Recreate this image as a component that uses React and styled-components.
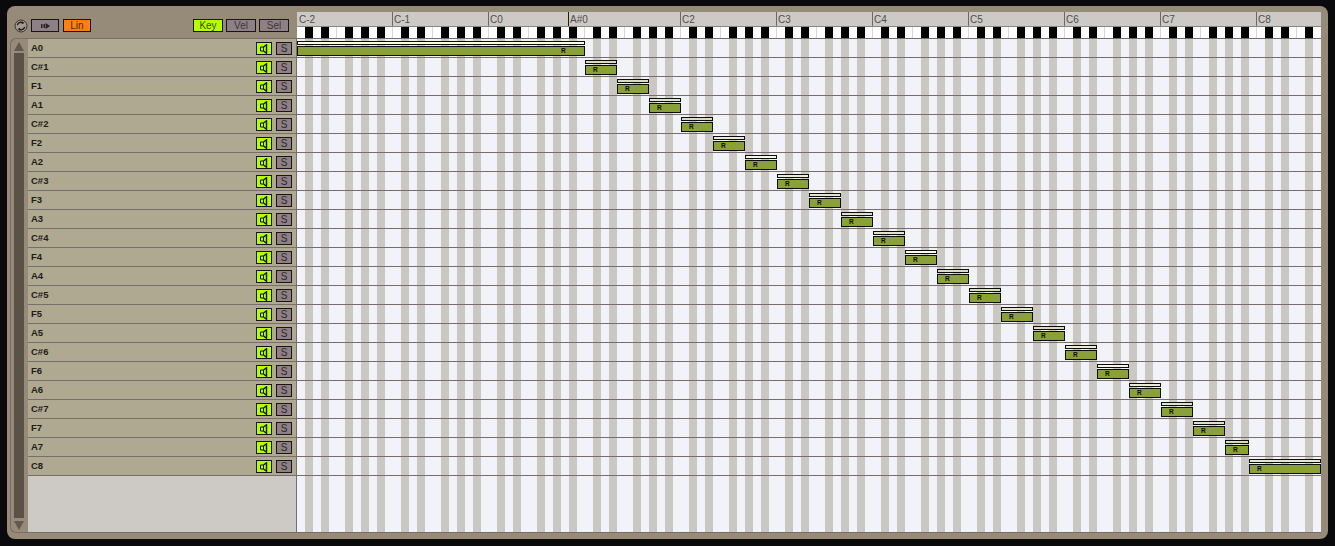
import React from 'react';
import styled, { createGlobalStyle } from 'styled-components';

const Global = createGlobalStyle`
  html, body { margin: 0; padding: 0; background: #0a0a0c; overflow: hidden; }
  #root { width: 1335px; height: 546px; }
`;

const FONT = `"Liberation Sans", Arial, sans-serif`;
const LINE = '#786c6c';

const Frame = styled.div`
  width: 1335px;
  height: 546px;
  box-sizing: border-box;
  padding: 6px 7px 7px 7px;
  background: #0a0a0c;
  font-family: ${FONT};
`;

const Panel = styled.div`
  height: 533px;
  box-sizing: border-box;
  padding: 6px 7px 6px 3px;
  background: #968a79;
  border-radius: 8px;
  display: grid;
  grid-template-columns: 287px 1024px;
`;

const LeftColumn = styled.div`
  display: flex;
  flex-direction: column;
`;

const Header = styled.div`
  height: 26px;
  display: flex;
  align-items: center;
  padding: 1px 8px 0 4px;
  box-sizing: border-box;
`;

const ToggleButton = styled.div`
  width: ${p => p.$w || 30}px;
  height: 13px;
  box-sizing: border-box;
  border: 1px solid #1a1416;
  background: ${p => p.$bg || '#8f8086'};
  color: ${p => p.$ink || '#3f3535'};
  font-size: 10px;
  line-height: 11px;
  text-align: center;
  display: flex;
  align-items: center;
  justify-content: center;
  margin-left: ${p => p.$ml || 0}px;
  flex: none;
`;

const Spacer = styled.div`
  flex: 1;
`;

const LeftBody = styled.div`
  flex: 1;
  display: flex;
  min-height: 0;
`;

const ScrollRail = styled.div`
  width: 18px;
  box-sizing: border-box;
  border: 1px solid ${LINE};
  border-right: 0;
  border-radius: 6px 0 0 6px;
  display: flex;
  flex-direction: column;
  align-items: flex-start;
  padding: 3px 4px 2px 3px;
`;

const ArrowUp = styled.div`
  width: 0;
  height: 0;
  border-left: 5px solid transparent;
  border-right: 5px solid transparent;
  border-bottom: 9px solid #625a4e;
  flex: none;
`;

const ArrowDown = styled(ArrowUp)`
  border-bottom: 0;
  border-top: 9px solid #625a4e;
`;

const ScrollTrack = styled.div`
  flex: 1;
  width: 10px;
  margin: 2px 0 3px;
  background: #5a5147;
`;

const TrackList = styled.div`
  flex: 1;
  display: flex;
  flex-direction: column;
  background: #cdcac6;
  border-top: 1px solid ${LINE};
  border-right: 1px solid ${LINE};
  border-bottom: 1px solid ${LINE};
`;

const TrackRow = styled.div`
  height: 19px;
  box-sizing: border-box;
  flex: none;
  background: #afa992;
  border-bottom: 1px solid ${LINE};
  display: flex;
  align-items: flex-start;
  padding: 3px 4px 0 3px;
`;

const TrackName = styled.span`
  flex: 1;
  font-size: 9.5px;
  font-weight: 700;
  line-height: 11px;
  color: #1e1c18;
`;

const MuteButton = styled.div`
  width: 16px;
  height: 13px;
  box-sizing: border-box;
  border: 1px solid #1a1416;
  background: #b5ff00;
  display: flex;
  align-items: center;
  justify-content: center;
  flex: none;
`;

const SoloButton = styled.div`
  width: 16px;
  height: 13px;
  margin-left: 4px;
  box-sizing: border-box;
  border: 1px solid #1a1416;
  background: #8f8086;
  color: #2e2626;
  font-size: 10px;
  line-height: 11px;
  text-align: center;
  flex: none;
`;

const RightColumn = styled.div`
  display: flex;
  flex-direction: column;
`;

const Ruler = styled.div`
  height: 15px;
  box-sizing: border-box;
  display: flex;
  background: #cdcac6;
  border-bottom: 1px solid #8d8580;
`;

const RulerCell = styled.div`
  width: ${p => p.$w}px;
  box-sizing: border-box;
  flex: none;
  border-left: ${p => (p.$first ? '0' : `1px solid ${p.$strong ? '#1c1a1c' : '#6f6868'}`)};
  padding-left: ${p => (p.$first ? 2 : 1)}px;
  font-size: 10px;
  line-height: 15px;
  color: #504c4c;
  white-space: nowrap;
  overflow: hidden;
`;

const stripes = (dark, light, seam) => `linear-gradient(to right,
  ${light} 0 8px, ${dark} 8px 16px, ${light} 16px 24px, ${dark} 24px 32px,
  ${light} 32px 39px, ${seam} 39px 40px, ${light} 40px 48px, ${dark} 48px 56px,
  ${light} 56px 64px, ${dark} 64px 72px, ${light} 72px 80px, ${dark} 80px 88px,
  ${light} 88px 95px, ${seam} 95px 96px)`;

const Keyboard = styled.div`
  height: 12px;
  box-sizing: border-box;
  border-bottom: 1px solid ${LINE};
  background-image: ${stripes('#000000', '#ffffff', '#d8d8d8')};
  background-size: 96px 100%;
`;

const Grid = styled.div`
  flex: 1;
  display: flex;
  flex-direction: column;
  border-bottom: 1px solid ${LINE};
  background-image: ${stripes('#cbc8c3', '#f1f3f9', '#f1f3f9')};
  background-size: 96px 100%;
`;

const GridRow = styled.div`
  height: 19px;
  box-sizing: border-box;
  flex: none;
  position: relative;
  border-bottom: 1px solid ${LINE};
`;

const Note = styled.div`
  position: absolute;
  top: 2px;
  left: ${p => p.$left}px;
  width: ${p => p.$width}px;
  display: flex;
  flex-direction: column;
  gap: 1px;
`;

const VelocityBar = styled.div`
  height: 4px;
  box-sizing: border-box;
  border: 1px solid #0c0c08;
  background: ${p => p.$tone};
`;

const NoteBody = styled.div`
  height: 10px;
  box-sizing: border-box;
  border: 1px solid #0c0c08;
  background: #8aa138;
  color: #0c0c08;
  font-size: 6.5px;
  font-weight: 700;
  line-height: 8px;
  padding-left: ${p => p.$labelAt}px;
`;

const names = ['A0'];
const octaveNames = ['C#', 'F', 'A'];
for (let o = 1; o <= 7; o += 1) octaveNames.forEach(n => names.push(`${n}${o}`));
names.push('C8');

const tones = ['#fdfde8', '#d8dcc0', '#d8dcc0', '#e2e6d0', '#d8dcc0', '#e8ecd8', '#f4f6ea', '#e8ecd8', '#e2e6d0', '#dfe2cc', '#e2e6d0'];

const notes = names.map((name, i) => {
  if (i === 0) return { name, left: 0, width: 288, labelAt: 263, tone: tones[0] };
  if (name === 'A7') return { name, left: 928, width: 24, labelAt: 7, tone: '#d8dcc0' };
  if (name === 'C8') return { name, left: 952, width: 72, labelAt: 7, tone: '#e2e6d0' };
  return { name, left: 288 + (i - 1) * 32, width: 32, labelAt: 7, tone: tones[i % tones.length] };
});

const rulerCells = [
  { label: 'C-2', w: 95, first: true },
  { label: 'C-1', w: 96 },
  { label: 'C0', w: 80 },
  { label: 'A#0', w: 112, strong: true },
  { label: 'C2', w: 96 },
  { label: 'C3', w: 96 },
  { label: 'C4', w: 96 },
  { label: 'C5', w: 96 },
  { label: 'C6', w: 96 },
  { label: 'C7', w: 96 },
  { label: 'C8', w: 65 },
];

const SyncIcon = () => (
  <svg width="14" height="14" viewBox="0 0 14 14">
    <circle cx="7" cy="7" r="6" fill="#a39a94" stroke="#3a3430" strokeWidth="1" />
    <path d="M3.4 6.2 A3.6 3.6 0 0 1 8.6 3.6" fill="none" stroke="#1d1a18" strokeWidth="1.4" />
    <path d="M10.6 7.8 A3.6 3.6 0 0 1 5.4 10.4" fill="none" stroke="#1d1a18" strokeWidth="1.4" />
    <path d="M8 2.2 L10.4 4 L7.8 5.2 Z" fill="#1d1a18" />
    <path d="M6 11.8 L3.6 10 L6.2 8.8 Z" fill="#1d1a18" />
  </svg>
);

const FoldIcon = () => (
  <svg width="9" height="6" viewBox="0 0 9 6">
    <rect x="0" y="1" width="1.5" height="4" fill="#2a2226" />
    <rect x="2.5" y="1" width="1.5" height="4" fill="#2a2226" />
    <path d="M4.6 0 L9 3 L4.6 6 Z" fill="#2a2226" />
  </svg>
);

const SpeakerIcon = () => (
  <svg width="10" height="10" viewBox="0 0 10 10">
    <path d="M1.5 3 H4.5 V7 H1.5 Z" fill="none" stroke="#10140a" strokeWidth="1" />
    <path d="M4.5 3 L7.5 0.8 V9.2 L4.5 7" fill="none" stroke="#10140a" strokeWidth="1.4" />
  </svg>
);

export default function App() {
  return (
    <>
      <Global />
      <Frame>
        <Panel>
          <LeftColumn>
            <Header>
              <SyncIcon />
              <ToggleButton $w={28} $ml={3}><FoldIcon /></ToggleButton>
              <ToggleButton $w={28} $ml={4} $bg="#ff7f10" $ink="#4a2a08">Lin</ToggleButton>
              <Spacer />
              <ToggleButton $bg="#b5ff00" $ink="#3c5000">Key</ToggleButton>
              <ToggleButton $ml={3}>Vel</ToggleButton>
              <ToggleButton $ml={3}>Sel</ToggleButton>
            </Header>
            <LeftBody>
              <ScrollRail>
                <ArrowUp />
                <ScrollTrack />
                <ArrowDown />
              </ScrollRail>
              <TrackList>
                {names.map(name => (
                  <TrackRow key={name}>
                    <TrackName>{name}</TrackName>
                    <MuteButton><SpeakerIcon /></MuteButton>
                    <SoloButton>S</SoloButton>
                  </TrackRow>
                ))}
              </TrackList>
            </LeftBody>
          </LeftColumn>
          <RightColumn>
            <Ruler>
              {rulerCells.map(c => (
                <RulerCell key={c.label} $w={c.w} $first={c.first} $strong={c.strong}>{c.label}</RulerCell>
              ))}
            </Ruler>
            <Keyboard />
            <Grid>
              {notes.map(n => (
                <GridRow key={n.name}>
                  <Note $left={n.left} $width={n.width}>
                    <VelocityBar $tone={n.tone} />
                    <NoteBody $labelAt={n.labelAt}>R</NoteBody>
                  </Note>
                </GridRow>
              ))}
            </Grid>
          </RightColumn>
        </Panel>
      </Frame>
    </>
  );
}
